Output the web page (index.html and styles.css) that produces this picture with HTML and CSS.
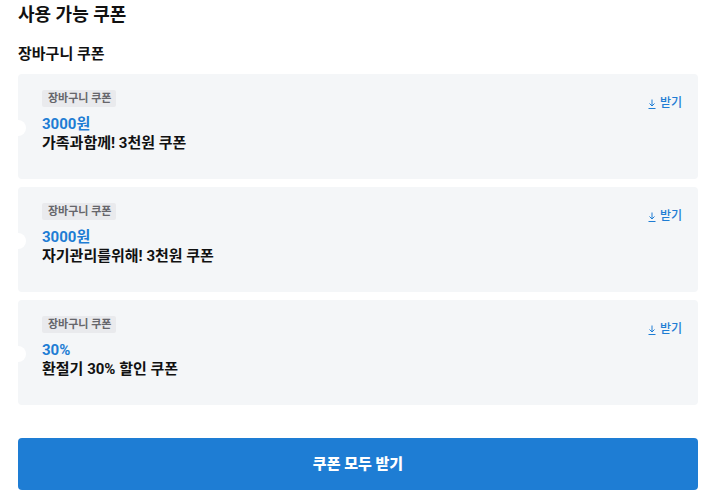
FILE: index.html
```
<!DOCTYPE html>
<html lang="ko">
<head>
  <meta charset="UTF-8" />
  <meta name="viewport" content="width=device-width, initial-scale=1.0"/>
  <title>쿠폰</title>
  <link rel="stylesheet" href="styles.css">
</head>
<body>

  <main class="coupon-page">
    <h1 class="page-title">사용 가능 쿠폰</h1>
    <h2 class="section-title">장바구니 쿠폰</h2>

    <ul class="coupon-list">
      <li class="coupon">
        <div class="coupon-info">
          <span class="tag">장바구니 쿠폰</span>
          <strong class="amount">3000원</strong>
          <p class="coupon-name">가족과함께! 3천원 쿠폰</p>
        </div>
        <button type="button" class="download">
          <svg class="download-icon" viewBox="0 0 8 10" aria-hidden="true"><path d="M4 0.5V7M1.5 4.5L4 7L6.5 4.5M0.5 9.5H7.5"/></svg>
          받기
        </button>
      </li>
      <li class="coupon">
        <div class="coupon-info">
          <span class="tag">장바구니 쿠폰</span>
          <strong class="amount">3000원</strong>
          <p class="coupon-name">자기관리를위해! 3천원 쿠폰</p>
        </div>
        <button type="button" class="download">
          <svg class="download-icon" viewBox="0 0 8 10" aria-hidden="true"><path d="M4 0.5V7M1.5 4.5L4 7L6.5 4.5M0.5 9.5H7.5"/></svg>
          받기
        </button>
      </li>
      <li class="coupon">
        <div class="coupon-info">
          <span class="tag">장바구니 쿠폰</span>
          <strong class="amount">30%</strong>
          <p class="coupon-name">환절기 30% 할인 쿠폰</p>
        </div>
        <button type="button" class="download">
          <svg class="download-icon" viewBox="0 0 8 10" aria-hidden="true"><path d="M4 0.5V7M1.5 4.5L4 7L6.5 4.5M0.5 9.5H7.5"/></svg>
          받기
        </button>
      </li>
    </ul>

    <button type="button" class="download-all">쿠폰 모두 받기</button>
  </main>

</body>
</html>
```

FILE: styles.css
```
* {
  box-sizing: border-box;
}

body {
  margin: 0;
  font-family: Roboto, 'Noto Sans CJK KR', sans-serif;
  background: #fff;
  color: #111;
}

h1, h2, p, ul {
  margin: 0;
  padding: 0;
}

button {
  border: none;
  font-family: inherit;
  cursor: pointer;
}

.coupon-page {
  padding: 3px 11px 2px 18px;
}

.page-title {
  font-size: 18px;
  line-height: 24px;
}

.section-title {
  margin-top: 15px;
  font-size: 15px;
  line-height: 24px;
}

.coupon-list {
  display: flex;
  flex-direction: column;
  gap: 8px;
  margin-top: 8px;
  list-style: none;
}

.coupon {
  position: relative;
  display: flex;
  justify-content: space-between;
  align-items: flex-start;
  padding: 16px 16px 26px 24px;
  border-radius: 4px;
  background: #f4f6f8;
}

/* ticket notch on the left edge */
.coupon::before {
  content: "";
  position: absolute;
  top: 50%;
  left: -8px;
  width: 16px;
  height: 16px;
  margin-top: -7px;
  border-radius: 50%;
  background: #fff;
}

.coupon-info {
  display: flex;
  flex-direction: column;
  align-items: flex-start;
}

.tag {
  margin-bottom: 8px;
  padding: 0 5px 0 6px;
  border-radius: 2px;
  background: #e9eaed;
  color: #66666b;
  font-size: 11px;
  font-weight: 700;
  line-height: 17px;
}

.amount {
  color: #1e7dd4;
  font-size: 15px;
  line-height: 19px;
}

.coupon-name {
  font-size: 15px;
  font-weight: 700;
  line-height: 19px;
}

.download {
  display: flex;
  align-items: center;
  gap: 4px;
  margin-top: 5px;
  padding: 0;
  background: none;
  color: #1e7dd4;
  font-size: 12px;
  font-weight: 500;
  line-height: 17px;
}

.download-icon {
  width: 8px;
  height: 10px;
  fill: none;
  stroke: currentColor;
  stroke-width: 1;
}

.download-all {
  display: block;
  width: 100%;
  margin-top: 33px;
  padding: 14px;
  border-radius: 4px;
  background: #1e7dd4;
  color: #fff;
  font-size: 15px;
  font-weight: 900;
  line-height: 24px;
}
```
